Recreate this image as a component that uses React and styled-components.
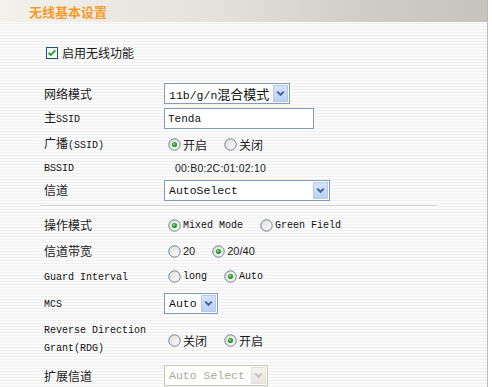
import React from "react";
import styled, { createGlobalStyle } from "styled-components";

const GlobalStyle = createGlobalStyle`
  html, body {
    margin: 0;
    padding: 0;
    background: #ffffff;
  }
  body {
    font-family: "Noto Sans CJK SC", "Liberation Sans", sans-serif;
    font-size: 12px;
    color: #1a1a1a;
  }
`;

const Page = styled.div`
  width: 487px;
  height: 387px;
  border-right: 1px solid #b9b9b9;
  overflow: hidden;
  background: repeating-linear-gradient(
    to bottom,
    #fbfbfb 0px,
    #fbfbfb 2px,
    #f0f0f0 2px,
    #f0f0f0 3px
  );
`;

const Header = styled.div`
  height: 22px;
  display: flex;
  align-items: center;
  padding-left: 29px;
  background: linear-gradient(to right, #f3f1ec 0%, #e4e1dc 45%, #cdc9c3 80%, #c7c3bd 100%);
`;

const Title = styled.h1`
  margin: 0;
  font-size: 13px;
  font-weight: bold;
  color: #f09a30;
  text-shadow: 0 0 2px #fff3dc;
`;

const EnableRow = styled.div`
  height: 22px;
  margin: 20px 0 17px 46px;
  display: flex;
  align-items: center;
  gap: 4px;
`;

const Form = styled.div`
  margin-left: 41px;
  width: 396px;
`;

const Row = styled.div`
  height: ${(p) => p.$h}px;
  display: grid;
  grid-template-columns: 123px 1fr;
  align-items: center;
`;

const Label = styled.div`
  padding-left: ${(p) => (p.$flush ? 0 : 3)}px;
  font-size: 12px;
  line-height: 18px;
  color: #1a1a1a;
`;

const En = styled.span`
  font-family: "Liberation Mono", monospace;
  font-size: 10px;
  color: #111;
`;

const Cjk = styled.span`
  font-family: "Noto Sans CJK SC", sans-serif;
  font-size: 13px;
`;

const Cell = styled.div`
  display: flex;
  align-items: center;
  padding-left: ${(p) => p.$indent || 0}px;
`;

const Divider = styled.div`
  height: 1px;
  margin: 2px 0 4px;
  background: #cfcfcf;
  border-bottom: 1px solid #ffffff;
`;

const SelectBox = styled.div`
  box-sizing: border-box;
  width: ${(p) => p.$w}px;
  height: 21px;
  display: flex;
  align-items: center;
  justify-content: space-between;
  padding: 0 1px 0 4px;
  background: #ffffff;
  border: 1px solid ${(p) => (p.$disabled ? "#c9c7ba" : "#7f9db9")};
  font-family: "Liberation Mono", "Noto Sans CJK SC", monospace;
  font-size: 11.5px;
  color: ${(p) => (p.$disabled ? "#aca899" : "#111")};
  white-space: nowrap;
`;

const DropButton = styled.span`
  box-sizing: border-box;
  width: 15px;
  height: 17px;
  display: flex;
  align-items: center;
  justify-content: center;
  border: 1px solid ${(p) => (p.$disabled ? "#e2e0d8" : "#b5c8ef")};
  background: ${(p) =>
    p.$disabled
      ? "linear-gradient(#f4f3ee, #e8e6de)"
      : "linear-gradient(#d6e3fc, #bcd0f7)"};
`;

const TextInput = styled.div`
  box-sizing: border-box;
  width: 150px;
  height: 21px;
  display: flex;
  align-items: center;
  padding-left: 3px;
  background: #ffffff;
  border: 1px solid #7f9db9;
  font-family: "Liberation Mono", monospace;
  font-size: 11px;
  color: #111;
`;

const RadioGroup = styled.div`
  display: flex;
  align-items: center;
  gap: 17px;
  padding-left: 4px;
`;

const Option = styled.label`
  display: flex;
  align-items: center;
  gap: 2px;
  font-size: 12px;
  color: #1a1a1a;
`;

const Num = styled.span`
  font-family: "Liberation Sans", sans-serif;
  font-size: 11px;
  color: #1a1a1a;
`;

const Mac = styled.span`
  font-family: "Liberation Sans", sans-serif;
  font-size: 10.5px;
  color: #1a1a1a;
  letter-spacing: 0.2px;
`;

const RdgLabel = styled(Label)`
  display: flex;
  flex-direction: column;
  line-height: 18px;
`;

const Chevron = ({ disabled }) => (
  <svg width="9" height="7" viewBox="0 0 9 7">
    <path
      d="M1.2 1.6 L4.5 4.8 L7.8 1.6"
      fill="none"
      stroke={disabled ? "#c4c2b8" : "#4a6596"}
      strokeWidth="2"
    />
  </svg>
);

const Select = ({ width, disabled, children }) => (
  <SelectBox $w={width} $disabled={disabled}>
    <span>{children}</span>
    <DropButton $disabled={disabled}>
      <Chevron disabled={disabled} />
    </DropButton>
  </SelectBox>
);

const RadioMark = ({ checked }) => (
  <svg width="13" height="13" viewBox="0 0 13 13">
    <defs>
      <linearGradient id="rg" x1="0" y1="0" x2="1" y2="1">
        <stop offset="0" stopColor="#dcdcd6" />
        <stop offset="1" stopColor="#ffffff" />
      </linearGradient>
    </defs>
    <circle cx="6.5" cy="6.5" r="5.7" fill="url(#rg)" stroke="#6d7f93" strokeWidth="1" />
    {checked && <circle cx="6.5" cy="6.5" r="2.6" fill="#2aa12a" />}
    {checked && <circle cx="6" cy="6" r="1" fill="#8fdc8f" />}
  </svg>
);

const CheckMark = () => (
  <svg width="12" height="12" viewBox="0 0 12 12">
    <rect x="0.5" y="0.5" width="11" height="11" fill="#f6f6f2" stroke="#1c5180" />
    <path d="M2.6 5.8 L4.8 8 L9.3 3.4" fill="none" stroke="#21a121" strokeWidth="1.8" />
  </svg>
);

const Radio = ({ checked, children }) => (
  <Option>
    <RadioMark checked={checked} />
    {children}
  </Option>
);

const App = () => {
  return (
    <>
      <GlobalStyle />
      <Page>
        <Header>
          <Title>无线基本设置</Title>
        </Header>

        <EnableRow>
          <CheckMark />
          <Label as="span" $flush>启用无线功能</Label>
        </EnableRow>

        <Form>
          <Row $h={25}>
            <Label>网络模式</Label>
            <Cell>
              <Select width={126}>
                11b/g/n<Cjk>混合模式</Cjk>
              </Select>
            </Cell>
          </Row>
          <Row $h={25}>
            <Label>
              主<En>SSID</En>
            </Label>
            <Cell>
              <TextInput>Tenda</TextInput>
            </Cell>
          </Row>
          <Row $h={26}>
            <Label>
              广播<En>(SSID)</En>
            </Label>
            <RadioGroup>
              <Radio checked>开启</Radio>
              <Radio>关闭</Radio>
            </RadioGroup>
          </Row>
          <Row $h={20}>
            <Label>
              <En>BSSID</En>
            </Label>
            <Cell $indent={11}>
              <Mac>00:B0:2C:01:02:10</Mac>
            </Cell>
          </Row>
          <Row $h={26}>
            <Label>信道</Label>
            <Cell>
              <Select width={166}>AutoSelect</Select>
            </Cell>
          </Row>

          <Divider />

          <Row $h={28}>
            <Label>操作模式</Label>
            <RadioGroup>
              <Radio checked>
                <En>Mixed Mode</En>
              </Radio>
              <Radio>
                <En>Green Field</En>
              </Radio>
            </RadioGroup>
          </Row>
          <Row $h={24}>
            <Label>信道带宽</Label>
            <RadioGroup>
              <Radio>
                <Num>20</Num>
              </Radio>
              <Radio checked>
                <Num>20/40</Num>
              </Radio>
            </RadioGroup>
          </Row>
          <Row $h={27}>
            <Label>
              <En>Guard Interval</En>
            </Label>
            <RadioGroup>
              <Radio>
                <En>long</En>
              </Radio>
              <Radio checked>
                <En>Auto</En>
              </Radio>
            </RadioGroup>
          </Row>
          <Row $h={26}>
            <Label>
              <En>MCS</En>
            </Label>
            <Cell>
              <Select width={54}>Auto</Select>
            </Cell>
          </Row>
          <Row $h={48}>
            <RdgLabel>
              <En>Reverse Direction</En>
              <En>Grant(RDG)</En>
            </RdgLabel>
            <RadioGroup>
              <Radio>关闭</Radio>
              <Radio checked>开启</Radio>
            </RadioGroup>
          </Row>
          <Row $h={23}>
            <Label>扩展信道</Label>
            <Cell>
              <Select width={104} disabled>
                Auto Select
              </Select>
            </Cell>
          </Row>
        </Form>
      </Page>
    </>
  );
};

export default App;
